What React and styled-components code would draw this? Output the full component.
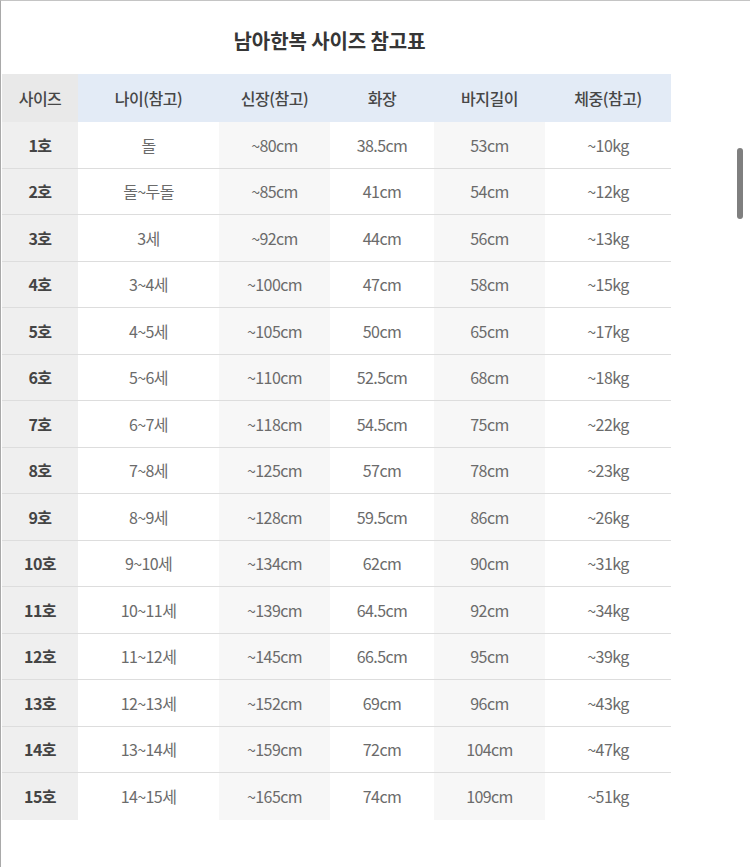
import React from "react";
import styled, { createGlobalStyle } from "styled-components";

const Global = createGlobalStyle`
  html, body { margin: 0; padding: 0; background: #fff; }
  body {
    font-family: "Noto Sans CJK KR", "Noto Sans", sans-serif;
    height: 868px;
    overflow: hidden;
  }
`;

const Page = styled.div`
  position: relative;
  height: 867px;
  border-left: 1px solid #a9a9a9;
  border-top: 1px solid #c4c4c4;
  padding-left: 1px;
  box-sizing: border-box;
`;

const Sheet = styled.div`
  width: 669px;
  display: flex;
  flex-direction: column;
`;

const TitleBar = styled.div`
  height: 73px;
  display: flex;
  align-items: center;
  justify-content: center;
  padding-right: 14px;
  box-sizing: border-box;
`;

const Title = styled.h1`
  margin: 0;
  margin-top: 6px;
  font-size: 20px;
  font-weight: 700;
  color: #363636;
  letter-spacing: -0.1px;
`;

const Row = styled.div`
  display: grid;
  grid-template-columns: 76px 141px 111px 104px 111px 126px;
  height: ${(p) => (p.$head ? "48px" : "46.5px")};
  box-sizing: border-box;
  border-bottom: ${(p) => (p.$line ? "1px solid #dddddd" : "none")};
`;

const HeadCell = styled.div`
  display: flex;
  align-items: center;
  justify-content: center;
  background: ${(p) => (p.$first ? "#e9e9e9" : "#e3ebf6")};
  color: #474747;
  font-size: 16px;
  font-weight: 500;
  letter-spacing: -0.5px;
`;

const Cell = styled.div`
  display: flex;
  align-items: center;
  justify-content: center;
  background: ${(p) =>
    p.$first ? "#efefef" : p.$shade ? "#f7f7f7" : "#ffffff"};
  color: ${(p) => (p.$first ? "#444" : "#6b6b6b")};
  font-size: 16px;
  font-weight: ${(p) => (p.$first ? 700 : 400)};
  letter-spacing: -0.6px;
`;

const Scrollbar = styled.div`
  position: absolute;
  left: 736px;
  top: 147px;
  width: 6px;
  height: 71px;
  border-radius: 3px;
  background: #7f7f7f;
`;

const headers = ["사이즈", "나이(참고)", "신장(참고)", "화장", "바지길이", "체중(참고)"];

const rows = [
  ["1호", "돌", "~80cm", "38.5cm", "53cm", "~10kg"],
  ["2호", "돌~두돌", "~85cm", "41cm", "54cm", "~12kg"],
  ["3호", "3세", "~92cm", "44cm", "56cm", "~13kg"],
  ["4호", "3~4세", "~100cm", "47cm", "58cm", "~15kg"],
  ["5호", "4~5세", "~105cm", "50cm", "65cm", "~17kg"],
  ["6호", "5~6세", "~110cm", "52.5cm", "68cm", "~18kg"],
  ["7호", "6~7세", "~118cm", "54.5cm", "75cm", "~22kg"],
  ["8호", "7~8세", "~125cm", "57cm", "78cm", "~23kg"],
  ["9호", "8~9세", "~128cm", "59.5cm", "86cm", "~26kg"],
  ["10호", "9~10세", "~134cm", "62cm", "90cm", "~31kg"],
  ["11호", "10~11세", "~139cm", "64.5cm", "92cm", "~34kg"],
  ["12호", "11~12세", "~145cm", "66.5cm", "95cm", "~39kg"],
  ["13호", "12~13세", "~152cm", "69cm", "96cm", "~43kg"],
  ["14호", "13~14세", "~159cm", "72cm", "104cm", "~47kg"],
  ["15호", "14~15세", "~165cm", "74cm", "109cm", "~51kg"],
];

export default function App() {
  return (
    <>
      <Global />
      <Page>
        <Sheet>
          <TitleBar>
            <Title>남아한복 사이즈 참고표</Title>
          </TitleBar>
          <Row $head>
            {headers.map((h, i) => (
              <HeadCell key={h} $first={i === 0}>
                {h}
              </HeadCell>
            ))}
          </Row>
          {rows.map((r, ri) => (
            <Row key={r[0]} $line={ri < rows.length - 1}>
              {r.map((c, ci) => (
                <Cell key={ci} $first={ci === 0} $shade={ci === 2 || ci === 4}>
                  {c}
                </Cell>
              ))}
            </Row>
          ))}
        </Sheet>
        <Scrollbar />
      </Page>
    </>
  );
}
